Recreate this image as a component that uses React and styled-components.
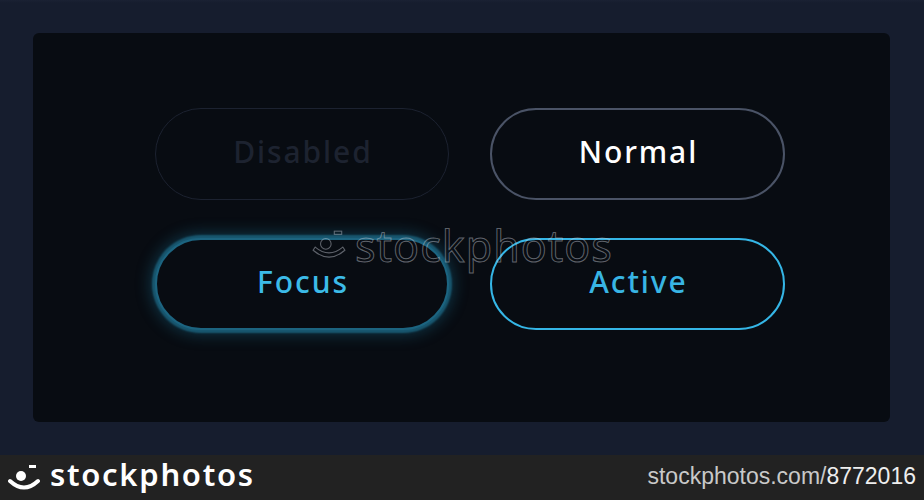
import React from "react";
import styled, { createGlobalStyle } from "styled-components";

const GlobalStyle = createGlobalStyle`
  html, body {
    margin: 0;
    padding: 0;
    background: #161d2e;
  }
  * { box-sizing: border-box; }
`;

const Page = styled.div`
  width: 924px;
  height: 500px;
  display: flex;
  flex-direction: column;
  background: linear-gradient(#1a2133 0, #161d2e 3px, #161d2e 92%, #131a26 100%);
  font-family: "Noto Sans", "DejaVu Sans", sans-serif;
  overflow: hidden;
`;

const Stage = styled.div`
  height: 455px;
  padding: 33px 34px 33px 33px;
`;

const Panel = styled.div`
  position: relative;
  height: 389px;
  background: #080c12;
  border-radius: 6px;
  padding: 75px 105px 0 122px;
`;

const Grid = styled.div`
  display: grid;
  grid-template-columns: 294px 295px;
  grid-template-rows: 92px 92px;
  column-gap: 41px;
  row-gap: 38px;
`;

const variants = {
  disabled: { border: "#1c2230", color: "#1d2330", glow: "none", width: "1.5px" },
  normal: { border: "#4a5366", color: "#ffffff", glow: "none", width: "2px" },
  focus: {
    border: "#1c6480",
    color: "#3cbbe8",
    glow: "0 0 2px 3px rgba(28, 100, 128, 0.8), 0 0 14px 6px rgba(22, 88, 116, 0.45)",
    width: "2px",
  },
  active: { border: "#35b6e6", color: "#38b5e4", glow: "none", width: "2px" },
};

const StateButton = styled.button`
  border-radius: 999px;
  background: #080c12;
  border: ${(p) => variants[p.$kind].width} solid ${(p) => variants[p.$kind].border};
  box-shadow: ${(p) => variants[p.$kind].glow};
  color: ${(p) => variants[p.$kind].color};
  font-family: "Noto Sans", "DejaVu Sans", sans-serif;
  font-weight: 500;
  font-size: 30px;
  letter-spacing: 1.9px;
  padding: 0 0 6px 2px;
  cursor: ${(p) => (p.$kind === "disabled" ? "default" : "pointer")};
`;

const Watermark = styled.div`
  position: absolute;
  left: 278px;
  top: 191px;
  display: flex;
  align-items: center;
  gap: 8px;
  pointer-events: none;
`;

const WatermarkText = styled.span`
  font-family: "Noto Sans", sans-serif;
  font-size: 43px;
  font-weight: 400;
  letter-spacing: 1px;
  color: transparent;
  -webkit-text-stroke: 1px rgba(200, 205, 215, 0.45);
  line-height: 1;
`;

const BottomBar = styled.div`
  height: 45px;
  background: #222222;
  display: flex;
  align-items: center;
  justify-content: space-between;
  padding: 0 8px 0 7px;
`;

const Brand = styled.div`
  display: flex;
  align-items: center;
  gap: 9px;
`;

const BrandName = styled.span`
  color: #ffffff;
  font-family: "Noto Sans", sans-serif;
  font-weight: 600;
  font-size: 31px;
  letter-spacing: 1.7px;
  line-height: 1;
  margin-top: -6px;
`;

const ImageId = styled.span`
  color: #c9c9c9;
  font-family: "Liberation Sans", Arial, sans-serif;
  font-size: 23px;
  margin-top: -2px;
  & b {
    font-weight: 400;
    color: #eeeeee;
  }
`;

const Smile = ({ size = 34, stroke = "#fff", outline = false }) => (
  <svg width={size} height={size} viewBox="0 0 34 34">
    {outline ? (
      <g fill="none" stroke={stroke} strokeWidth="1">
        <circle cx="14" cy="15" r="5" />
        <rect x="22" y="3" width="7" height="3" />
        <path d="M2 21 Q17 34 32 21 L30 18 Q17 29 4 18 Z" />
      </g>
    ) : (
      <g>
        <circle cx="14" cy="15" r="5" fill={stroke} />
        <rect x="22" y="4" width="7" height="3" fill={stroke} />
        <path d="M3 20 Q17 33 31 20" fill="none" stroke={stroke} strokeWidth="4" strokeLinecap="round" />
      </g>
    )}
  </svg>
);

const buttons = [
  { kind: "disabled", label: "Disabled" },
  { kind: "normal", label: "Normal" },
  { kind: "focus", label: "Focus" },
  { kind: "active", label: "Active" },
];

export default function App() {
  return (
    <Page>
      <GlobalStyle />
      <Stage>
        <Panel>
          <Grid>
            {buttons.map((b) => (
              <StateButton key={b.kind} $kind={b.kind} disabled={b.kind === "disabled"}>
                {b.label}
              </StateButton>
            ))}
          </Grid>
          <Watermark>
            <Smile size={36} stroke="rgba(200,205,215,0.45)" outline />
            <WatermarkText>stockphotos</WatermarkText>
          </Watermark>
        </Panel>
      </Stage>
      <BottomBar>
        <Brand>
          <Smile size={34} />
          <BrandName>stockphotos</BrandName>
        </Brand>
        <ImageId>
          stockphotos.com/<b>8772016</b>
        </ImageId>
      </BottomBar>
    </Page>
  );
}
